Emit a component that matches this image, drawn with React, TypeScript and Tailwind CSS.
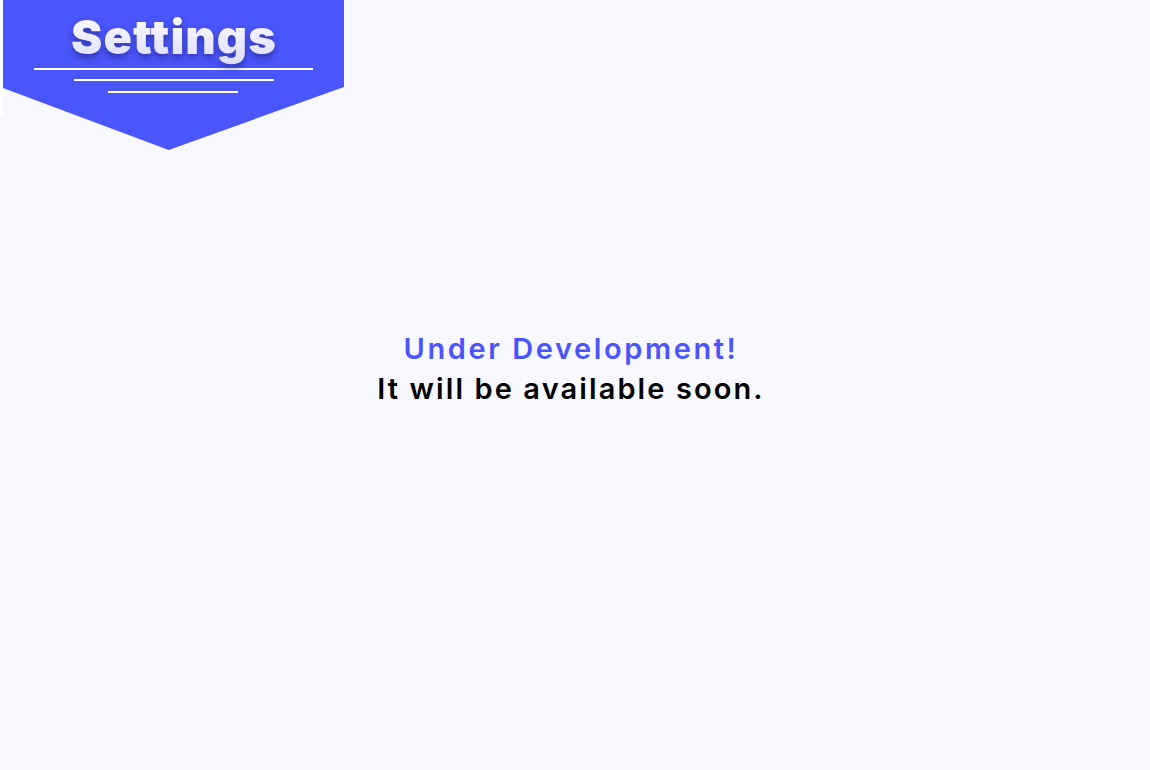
import React from 'react';

const App: React.FC = () => {
    return (
        <div className="flex flex-col w-full h-[770px] bg-[#f8f8ff] font-['Inter','Liberation_Sans',sans-serif] overflow-hidden">
            {/* Banner */}
            <div className="flex">
                <div className="w-[3px] h-[117px] bg-white" />
                <div className="w-[341px] h-[150px] bg-[#4a55fa] [clip-path:polygon(0_0,100%_0,100%_58%,48.6%_100%,0_58.7%)] flex flex-col items-center">
                    <h1 className="mt-[8px] h-[57px] text-[47px] leading-[57px] font-black tracking-[1px] text-transparent bg-clip-text bg-gradient-to-b from-white to-[#dcdcff] [filter:drop-shadow(0_4px_3px_rgba(20,20,90,0.45))] pl-[1px]">
                        Settings
                    </h1>
                    <div className="mt-[3px] w-[279px] h-[2px] bg-white -ml-[1px]" />
                    <div className="mt-[9px] w-[200px] h-[2px] bg-white" />
                    <div className="mt-[10px] w-[130px] h-[2px] bg-white -ml-[2px]" />
                </div>
            </div>

            {/* Content */}
            <div className="flex-1 flex flex-col items-center justify-center pb-[182px] pr-[8px]">
                <p className="text-[29px] leading-[40px] font-semibold tracking-[2.6px] text-[#4a55fa]">Under Development!</p>
                <p className="text-[29px] leading-[40px] font-semibold tracking-[2.1px] text-black">It will be available soon.</p>
            </div>
        </div>
    );
};

export default App;
